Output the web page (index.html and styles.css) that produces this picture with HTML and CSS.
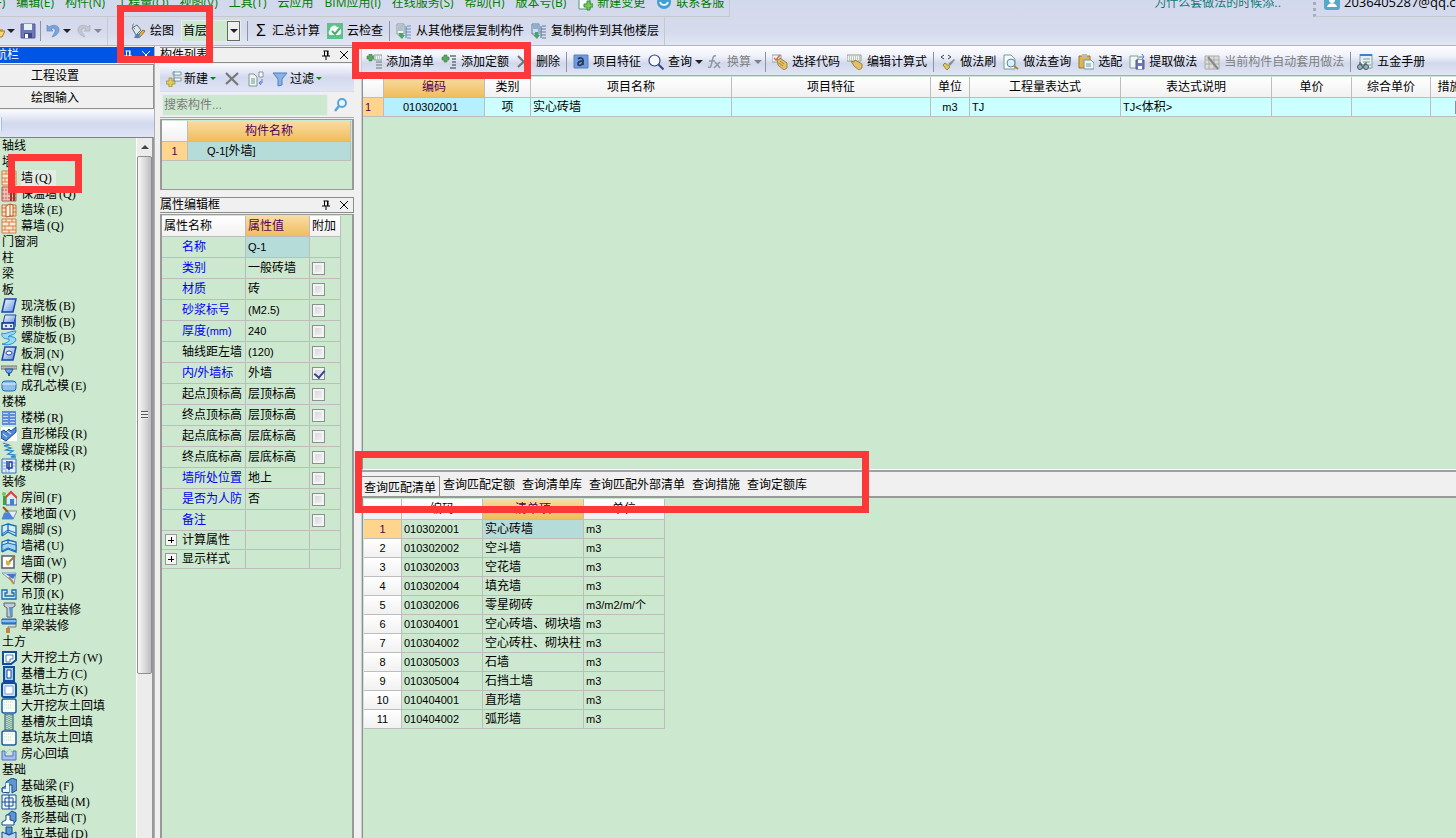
FILE: index.html
```html
<!DOCTYPE html>
<html lang="zh-CN">
<head>
<meta charset="utf-8">
<title>构件做法</title>
<link rel="stylesheet" href="styles.css">
</head>
<body>
<svg class="sprite" aria-hidden="true">
  <defs>
    <linearGradient id="blue" x1="0" y1="0" x2="1" y2="1"><stop offset="0" stop-color="#fff"/><stop offset="1" stop-color="#5c8fe0"/></linearGradient>
  </defs>
  <symbol id="pin" viewBox="0 0 10 10"><path d="M2.5 1h5M3.5 1v5M6.500 1v5M1 6h8M5 6v4" stroke="currentColor" fill="none"/><path d="M6 1h1.500v5H6z" fill="currentColor"/></symbol>
  <symbol id="close" viewBox="0 0 10 10"><path d="M1 1l8 8M9 1L1 9" stroke="currentColor" fill="none"/></symbol>
  <symbol id="open" viewBox="0 0 16 16"><path d="M1 4h5l1 2h7v8H1z" fill="#d8a63c"/><path d="M1 14l3-6h12l-3 6z" fill="#f7d675" stroke="#a87a22"/></symbol>
  <symbol id="save" viewBox="0 0 16 16"><path d="M1 1h14v14H1z" fill="#7077b8" stroke="#555b9b"/><path d="M4 1h8v6H4z" fill="#e6f0fb"/><path d="M4 10h8v5H4z" fill="#3c4a88"/><path d="M5 11h3v4H5z" fill="#fff"/></symbol>
  <symbol id="undo" viewBox="0 0 16 16"><path d="M2 2v6h6L6 6c3-2 5 0 4 3-1 2-2 3-3 5 4-1 7-4 7-7 0-5-6-6-10-3z" fill="#7ba4d8" stroke="#4f80bd" stroke-width=".6"/></symbol>
  <symbol id="redo" viewBox="0 0 16 16"><path d="M14 2v6H8l2-2C7 4 5 6 6 9c1 2 2 3 3 5-4-1-7-4-7-7 0-5 6-6 10-3z" fill="#c3c7d2" stroke="#a4a9b6" stroke-width=".6"/></symbol>
  <symbol id="draw" viewBox="0 0 16 16"><path d="M2 5l5-3 4 5-5 5z" fill="#dfe8e8" stroke="#557181"/><path d="M4 1c-2 0-2 3 1 5" fill="none" stroke="#777"/><path d="M13 7l2 1-5 6-3 1 1-3z" fill="#e6b53c" stroke="#947327"/><path d="M6 11h4l-1 4H4z" fill="#4d83c4"/></symbol>
  <symbol id="check" viewBox="0 0 16 16"><rect width="16" height="16" fill="#5dc28a"/><path d="M3 12a3 3 0 010-5 4 4 0 017-3 4 4 0 014 4 3 3 0 01-2 4z" fill="#f3fff5"/><path d="M5 8l3 3 5-6" fill="none" stroke="#4caa73" stroke-width="2"/></symbol>
  <symbol id="copyfrom" viewBox="0 0 16 16"><path d="M1 1h7v10H1z" fill="#edf2ec" stroke="#8b9995"/><path d="M2 3h5M2 5h5M2 7h5M11 3h4M10 6h5M10 9h5M10 12h5M11 15h4" stroke="#718fb1"/><path d="M10 3v12" stroke="#4a80bb"/><path d="M3 10h4v2h2l-3 4-4-4h1z" fill="#4da363"/></symbol>
  <symbol id="copyto" viewBox="0 0 16 16"><path d="M1 1h7v10H1z" fill="#c9def3" stroke="#5782b5"/><path d="M2 3h5M2 5h5M11 3h4M10 6h5M10 9h5M10 12h5M11 15h4" stroke="#657991"/><path d="M10 3v12" stroke="#4a6e8b"/><path d="M4 9h3v3h2l-3 4-4-4h2z" fill="#4da363"/></symbol>
  <symbol id="newdoc" viewBox="0 0 16 16"><path d="M2 0h8l3 4v10H2z" fill="#f8fbff" stroke="#4d9770"/><path d="M10 6v3H7v3h3v3h3v-3h3V9h-3V6z" fill="#7bc85c" stroke="#379237"/></symbol>
  <symbol id="service" viewBox="0 0 16 16"><circle cx="8" cy="7" r="7" fill="#40a0dc"/><path d="M4 7c1 4 7 4 8 0M5 4h2M9 4h2" stroke="#fff" stroke-width="1.500" fill="none"/></symbol>
  <symbol id="user" viewBox="0 0 16 16"><rect width="16" height="16" rx="3" fill="#55a9c8"/><circle cx="8" cy="6" r="3" fill="#fff"/><path d="M3 13c1-5 9-5 10 0z" fill="#fff"/></symbol>
  <symbol id="addnew" viewBox="0 0 16 16"><path d="M7 1h8v3H7zM8 7h7v3H8z" fill="#f5ffff" stroke="#789aa0"/><path d="M8 0v10" stroke="#789aa0"/><path d="M3 7h3v3h3v3H6v3H3v-3H0v-3h3z" fill="#e3ce57" stroke="#92812d" stroke-width=".7"/></symbol>
  <symbol id="cross" viewBox="0 0 16 16"><path d="M2 2l12 12M14 2L2 13" stroke="#777" stroke-width="2.200"/></symbol>
  <symbol id="copy" viewBox="0 0 16 16"><path d="M1 3h5l3 3v9H1z" fill="#eef4f6" stroke="#80969b"/><path d="M3 8h4M3 10h4M3 12h4" stroke="#6b9b83"/><path d="M11 1h4v5h-4z" fill="#fff" stroke="#80969b"/><path d="M14 8v4h-3m2-2l-2 2 2 2" stroke="#527fd0" fill="none"/></symbol>
  <symbol id="filter" viewBox="0 0 16 16"><path d="M1 2h14L10 8v6l-4 1V8z" fill="#8bb2e8" stroke="#507ebc"/></symbol>
  <symbol id="search" viewBox="0 0 16 16"><circle cx="9" cy="6" r="4" fill="#eaf7ff" stroke="#57a4dc" stroke-width="2"/><path d="M6 9l-4 5" stroke="#57a4dc" stroke-width="2.500"/></symbol>
  <symbol id="addlist" viewBox="0 0 16 16"><path d="M3 0h3v2h2v3H6v2H3V5H1V2h2z" fill="#57a75e" stroke="#357f3e" stroke-width=".6"/><path d="M8 1h8v5H8z" fill="#edf4f0" stroke="#8b9995"/><path d="M9 3h6M9 5h6" stroke="#9aa" stroke-dasharray="1 1"/><path d="M10 8h6M10 11h6M10 14h6" stroke="#8b9999" stroke-width="1.500"/></symbol>
  <symbol id="addquota" viewBox="0 0 16 16"><path d="M3 1h3v2h2v3H6v2H3V6H1V3h2z" fill="#57a75e" stroke="#357f3e" stroke-width=".6"/><path d="M9 2h6M11 5h4M11 8h4M11 11h4M9 14h6" stroke="#66716c" stroke-width="1.400"/></symbol>
  <symbol id="feature" viewBox="0 0 16 16"><path d="M1 1h14v13H1z" fill="#6f9cdf" stroke="#5780be"/><path d="M5 5c2-2 5-1 5 1v5M10 7c-3 0-5 1-5 3 0 2 3 2 5-1" fill="none" stroke="#273b63" stroke-width="1.800"/></symbol>
  <symbol id="lens" viewBox="0 0 16 16"><circle cx="6.500" cy="6.500" r="5.500" fill="#f5f8ff" stroke="#35457e" stroke-width="1.200"/><path d="M10.500 10.500l5 5" stroke="#35457e" stroke-width="2"/></symbol>
  <symbol id="fx" viewBox="0 0 16 16"><path d="M9 2c-3-1-3 2-4 6s-1 6-4 5M2 7h6M8 8l5 6M13 8l-6 6" stroke="#8f96a1" stroke-width="1.500" fill="none"/></symbol>
  <symbol id="code" viewBox="0 0 16 16"><path d="M0 1h9v7H0z" fill="#eef3f8" stroke="#91a1b3"/><path d="M2 4l2 2 4-5" stroke="#e66147" stroke-width="1.500" fill="none"/><path d="M5 5l2 1 1-2 7 5v5l-3 2-6-5z" fill="#e0c06b" stroke="#a08538"/><path d="M8 7l4 3M7 9l4 3" stroke="#a08538"/></symbol>
  <symbol id="formula" viewBox="0 0 16 16"><path d="M0 1h14v6H0z" fill="#f3f5ee" stroke="#8f9a91"/><path d="M2 3h11M2 5h11" stroke="#899b91" stroke-dasharray="1 1"/><path d="M4 7l3 1 1-2 7 4v4l-3 2-5-4z" fill="#e0c06b" stroke="#a08538"/></symbol>
  <symbol id="brush" viewBox="0 0 16 16"><path d="M4 1L1 3l3 2M8 1l3 2-3 2" stroke="#345" fill="none"/><path d="M14 5l1 1-5 6-2-2z" fill="#8a8f84"/><path d="M5 9l5 4-3 3-4-5z" fill="#d9ca61" stroke="#98882c"/></symbol>
  <symbol id="query" viewBox="0 0 16 16"><path d="M1 1h7l4 4v10H1z" fill="#f6fbf7" stroke="#789a99"/><circle cx="8" cy="9" r="4" fill="#d8eef9" stroke="#5e86a0"/><path d="M11 12l4 3" stroke="#ad853a" stroke-width="2"/></symbol>
  <symbol id="paste" viewBox="0 0 16 16"><path d="M1 2h11v12H1z" fill="#dfb64d" stroke="#99772a"/><path d="M4 0h5v4H4z" fill="#b5bdc0"/><path d="M6 6h7l3 3v6H6z" fill="#eef7f5" stroke="#7795a0"/><path d="M8 10h5M8 12h5" stroke="#7795a0"/></symbol>
  <symbol id="extract" viewBox="0 0 16 16"><path d="M1 2h8v12H1z" fill="#eef8f1" stroke="#809f93"/><path d="M7 6h8v9H7z" fill="#6f78b4" stroke="#4e5b90"/><path d="M9 6h4v3H9zM9 12h4v3H9z" fill="#fff"/><path d="M10 3h5m-2-3l2 3-2 2" stroke="#4f83b7" fill="none"/></symbol>
  <symbol id="auto" viewBox="0 0 16 16"><path d="M1 2h14v13H1z" fill="#ddd" stroke="#aaa"/><path d="M1 6h14M1 10h14M5 2v13M10 2v13" stroke="#aaa"/><path d="M4 3l10 12" stroke="#888" stroke-width="2"/></symbol>
  <symbol id="manual" viewBox="0 0 16 16"><path d="M3 0h12v14H3z" fill="#e4f0f5" stroke="#829eaa"/><path d="M3 1h12" stroke="#3a80d5" stroke-width="2"/><path d="M6 5h7M6 8h7M8 11h6" stroke="#87a28c"/><circle cx="3" cy="13" r="2.500" fill="#9bb2b5" stroke="#3f5961"/><circle cx="9" cy="13" r="2.500" fill="#9bb2b5" stroke="#3f5961"/><path d="M2 9h2v2h4V9h2" stroke="#3f5961" fill="none"/></symbol>
  <symbol id="brick" viewBox="0 0 16 16"><path d="M1 1h14v14H1z" fill="#fbe9d6" stroke="#d77b3e"/><path d="M1 4h14M1 8h14M1 12h14M5 1v3M11 1v3M8 4v4M4 8v4M12 8v4M8 12v3" stroke="#d77b3e"/></symbol>
  <symbol id="brickred" viewBox="0 0 16 16"><path d="M1 1h14v14H1z" fill="#edc0b5" stroke="#bd5548"/><path d="M1 4h14M1 8h14M1 12h14" stroke="#bd5548" stroke-dasharray="2 1"/><path d="M10 4v11M13 4v11" stroke="#9b362d" stroke-width="2"/></symbol>
  <symbol id="pier" viewBox="0 0 16 16"><path d="M1 3h14v11H1z" fill="#f7dfc5" stroke="#cf6c30"/><path d="M1 6h4M1 10h4M11 6h4M11 10h4" stroke="#cf6c30"/><path d="M5 4l4-2v12l-4 1zM9 2l3 1v11H9" fill="#fff3e4" stroke="#b65823"/></symbol>
  <symbol id="slab" viewBox="0 0 16 16"><path d="M4 1h11l-3 13H1z" fill="url(#blue)" stroke="#1d46a8" stroke-width="1.500"/></symbol>
  <symbol id="precast" viewBox="0 0 16 16"><path d="M4 1h11l-2 8H2z" fill="url(#blue)" stroke="#1d46a8"/><path d="M1 9h12v6H1z" fill="#dceaff" stroke="#142c83" stroke-width="1.500"/><path d="M4 11h2v2H4zM9 11h2v2H9zM13 9l2-8v11l-2 3z" fill="#3c65bc"/></symbol>
  <symbol id="spiral" viewBox="0 0 16 16"><path d="M1 3c3 2 8-2 14-2-1 5-6 3-8 6 3-1 7 0 8 2 0 5-9 7-14 5 4-1 8-2 7-5-5 0-8-2-7-6z" fill="#98d9fa" stroke="#278ed1"/></symbol>
  <symbol id="hole" viewBox="0 0 16 16"><path d="M4 1h11l-3 13H1z" fill="url(#blue)" stroke="#1d46a8" stroke-width="1.500"/><ellipse cx="8" cy="7" rx="3" ry="2" fill="#fff" stroke="#1d46a8"/></symbol>
  <symbol id="cap" viewBox="0 0 16 16"><path d="M0 4h16v3H0z" fill="#bbb" stroke="#777"/><path d="M4 7h8l-2 4H6z" fill="#76a6ec" stroke="#25529c"/><path d="M7 11h2v3H7z" fill="#25529c"/></symbol>
  <symbol id="core" viewBox="0 0 16 16"><rect x="1" y="3" width="14" height="10" rx="3" fill="#8cbfe9" stroke="#266ab4"/><path d="M1 6h14" stroke="#e4f4ff"/></symbol>
  <symbol id="stair" viewBox="0 0 16 16"><path d="M1 1h14v14H1z" fill="#5f8bdc"/><path d="M2 3.500h5M9 3.500h5M2 6.500h5M9 6.500h5M2 9.500h5M9 9.500h5M2 12.500h5M9 12.500h5" stroke="#c4d8fb"/></symbol>
  <symbol id="flight" viewBox="0 0 16 16"><path d="M0 1h16v14H0z" fill="#fff"/><path d="M0 6l3-2 2 2 3-3 2 2 5-4v5L5 15l-5-3z" fill="#548bd9" stroke="#17479b"/><path d="M2 8l4 3M6 5l4 3" stroke="#fff"/></symbol>
  <symbol id="coil" viewBox="0 0 16 16"><path d="M2 1l6 2-5 1 7 2-5 2 7 1-5 3 7 1-4 2h5" stroke="#2d82c5" stroke-width="1.300" fill="none"/></symbol>
  <symbol id="well" viewBox="0 0 16 16"><path d="M1 1h14v14H1z" fill="#e4eeff" stroke="#3a68bd"/><path d="M2 5h3M2 8h3M2 11h3M12 5h3M12 8h3M8 12v3M5 12v3" stroke="#7ba0e0"/><path d="M6 3v7h5V4H8v8" stroke="#1b3f9b" stroke-width="1.500" fill="none"/></symbol>
  <symbol id="house" viewBox="0 0 16 16"><path d="M5 7l5-5 6 6v7H5z" fill="#dce9f9" stroke="#548"/><path d="M4 8l6-6 6 6" fill="none" stroke="#e33a3a" stroke-width="2"/><path d="M9 9h4v6H9z" fill="#4180cf"/><path d="M2 6h3v9H2z" fill="#39a342"/><circle cx="3" cy="4" r="2" fill="#6cc85c"/></symbol>
  <symbol id="floor" viewBox="0 0 16 16"><path d="M5 5h11l-4 8H1z" fill="#e4efff" stroke="#888"/><path d="M3 7l5-1 5 7H1z" fill="#4b84d8"/><path d="M2 1l5 5" stroke="#8b5b1c" stroke-width="2"/></symbol>
  <symbol id="skirt" viewBox="0 0 16 16"><path d="M1 14V4l6-2v8l-6 4M7 2l8 2v10l-8-4" fill="#d5ecf8" stroke="#186dbb" stroke-width="1.300"/><path d="M1 12l6-4 8 3" stroke="#186dbb" fill="none"/></symbol>
  <symbol id="dado" viewBox="0 0 16 16"><path d="M1 14V4l6-2v9l-6 3M7 2l8 2v10l-8-3" fill="#d5ecf8" stroke="#186dbb" stroke-width="1.300"/><path d="M1 7l6-2 8 2v6l-8-3-6 3z" fill="#9ed3f2" stroke="#186dbb"/></symbol>
  <symbol id="face" viewBox="0 0 16 16"><path d="M1 2h12v12H1z" fill="#fff" stroke="#555c72" stroke-width="1.500"/><path d="M14 2L8 8" stroke="#9b7a4a" stroke-width="2"/><path d="M5 6l5 3-3 3-2-2z" fill="#d6ae43"/></symbol>
  <symbol id="ceiling" viewBox="0 0 16 16"><path d="M1 3h14l-2 10z" fill="#dbe8ff" stroke="#8b98b0"/><path d="M5 4h10l-3 5z" fill="#3d78ce"/><path d="M8 7l5 7" stroke="#b58a42" stroke-width="2"/></symbol>
  <symbol id="hang" viewBox="0 0 16 16"><path d="M1 4h5v3H4v3h9V7h-2V4h4v9H1z" fill="#d6edff" stroke="#1768ae" stroke-width="1.300"/></symbol>
  <symbol id="column" viewBox="0 0 16 16"><path d="M3 1h11v3l-3 2v9H6V6L3 4z" fill="#c5cbd3" stroke="#5a6370"/><path d="M8 5h3v9H9z" fill="#5595db"/></symbol>
  <symbol id="beam" viewBox="0 0 16 16"><path d="M1 1h14v5H1z" fill="#4289d4" stroke="#275b98"/><path d="M1 3h14" stroke="#d5eeff"/><path d="M15 6v3H7v2" stroke="#778" fill="none"/><path d="M5 10h4v5H5z" fill="#bd8641"/></symbol>
  <symbol id="pit" viewBox="0 0 16 16"><path d="M2 2h13v8l-5 4H2z" fill="#fff" stroke="#0e4e9a" stroke-width="2"/><path d="M5 5h7v4H9v3H5z" fill="#fff" stroke="#4a82be"/></symbol>
  <symbol id="trench" viewBox="0 0 16 16"><path d="M3 1h10v14H3z" fill="#aac9ec" stroke="#0e4e9a" stroke-width="2"/><path d="M6 4h4v8H6z" fill="#fff" stroke="#0e4e9a"/></symbol>
  <symbol id="base" viewBox="0 0 16 16"><rect x="1" y="1" width="14" height="14" rx="2" fill="#d2e5fa" stroke="#0e4e9a" stroke-width="2"/><path d="M4 4h8v8H4z" fill="#fff" stroke="#75a0d0"/></symbol>
  <symbol id="fill" viewBox="0 0 16 16"><rect x="1" y="1" width="14" height="14" rx="2" fill="#f5fbf5" stroke="#205aa5" stroke-width="1.500"/><path d="M3 4h10M3 7h8M3 10h8" stroke="#c4dfc6" stroke-dasharray="1 1"/></symbol>
  <symbol id="gravel" viewBox="0 0 16 16"><path d="M4 0h8v16H4z" fill="#bedac5" stroke="#0e4e73"/><path d="M6 1v14M8 2v13M10 1v14" stroke="#477a70" stroke-dasharray="1 1"/></symbol>
  <symbol id="backfill" viewBox="0 0 16 16"><path d="M1 5h3v5h8V5h3v9H1z" fill="#a6bdf1" stroke="#5572bd"/><path d="M5 7l4-4 3 5" stroke="#9aa" stroke-dasharray="1 1" fill="none"/></symbol>
  <symbol id="fbeam" viewBox="0 0 16 16"><path d="M1 14v-4l4-2V4l6-4 5 2v10l-5 3V7H8v8z" fill="#6094cf" stroke="#154b91"/><path d="M2 11h3V5h3v9H2z" fill="#eef7ff"/></symbol>
  <symbol id="raft" viewBox="0 0 16 16"><path d="M1 1h14v14H1z" fill="#eef7ff" stroke="#154b91"/><path d="M4 4h8v8H4zM8 1v14M1 8h14" stroke="#154b91" fill="none"/></symbol>
  <symbol id="strip" viewBox="0 0 16 16"><path d="M5 6l6-5 4 2v8l-3 3z" fill="#6094cf" stroke="#154b91"/><path d="M5 5h4v5l4 1v4H1v-3l4-2z" fill="#fff" stroke="#154b91"/></symbol>
  <symbol id="footing" viewBox="0 0 16 16"><path d="M1 6l7 3 7-3v6l-7 4-7-4z" fill="#b9d6f4" stroke="#154b91"/><path d="M5 1h6v6L8 9 5 7z" fill="#5c94d1" stroke="#154b91"/></symbol>
</svg>

<div class="app">
  <header class="top">
    <div class="menu-row">
      <nav class="menu" aria-label="主菜单">
        <button>文件(F)</button><button>编辑(E)</button><button>构件(N)</button><button>工程量(Q)</button><button>视图(V)</button><button>工具(T)</button><button>云应用</button><button>BIM应用(I)</button><button>在线服务(S)</button><button>帮助(H)</button><button>版本号(B)</button>
        <button><svg class="icon"><use href="#newdoc"/></svg>新建变更</button>
        <button><svg class="icon"><use href="#service"/></svg>联系客服</button>
      </nav>
      <a class="tip" href="#">为什么套做法的时候添..</a>
      <div class="account"><svg class="icon"><use href="#user"/></svg>2036405287@qq.com</div>
    </div>
    <div class="bar">
      <div class="quick">
        <button aria-label="打开"><svg class="icon"><use href="#open"/></svg><i class="caret"></i></button>
        <button aria-label="保存"><svg class="icon"><use href="#save"/></svg></button>
        <span class="sep"></span>
        <button aria-label="撤销"><svg class="icon"><use href="#undo"/></svg><i class="caret"></i></button>
        <button aria-label="重做"><svg class="icon"><use href="#redo"/></svg><i class="caret dim"></i></button>
      </div>
      <div class="tools">
        <button><svg class="icon"><use href="#draw"/></svg>绘图</button>
        <span class="combo"><select aria-label="楼层"><option>首层</option></select><span class="drop"><i class="caret"></i></span></span>
        <span class="sep"></span>
        <button><span class="sigma">Σ</span>汇总计算</button>
        <button><svg class="icon"><use href="#check"/></svg>云检查</button>
        <span class="sep"></span>
        <button><svg class="icon"><use href="#copyfrom"/></svg>从其他楼层复制构件</button>
        <button><svg class="icon"><use href="#copyto"/></svg>复制构件到其他楼层</button>
      </div>
    </div>
  </header>

  <div class="work">
    <aside class="side">
      <div class="caption active"><span class="cut">模块导航栏</span><svg class="mini"><use href="#pin"/></svg><svg class="mini"><use href="#close"/></svg></div>
      <button class="wide">工程设置</button>
      <button class="wide">绘图输入</button>
      <div class="strip"><span class="stub"></span></div>
      <div class="treebox">
        <ul class="tree">
          <li class="cat">轴线</li>
          <li class="cat">墙</li>
          <li><svg class="icon"><use href="#brick"/></svg><span class="picked">墙<span class="key">(Q)</span></span></li>
          <li><svg class="icon"><use href="#brickred"/></svg>保温墙<span class="key">(Q)</span></li>
          <li><svg class="icon"><use href="#pier"/></svg>墙垛<span class="key">(E)</span></li>
          <li><svg class="icon"><use href="#brick"/></svg>幕墙<span class="key">(Q)</span></li>
          <li class="cat">门窗洞</li>
          <li class="cat">柱</li>
          <li class="cat">梁</li>
          <li class="cat">板</li>
          <li><svg class="icon"><use href="#slab"/></svg>现浇板<span class="key">(B)</span></li>
          <li><svg class="icon"><use href="#precast"/></svg>预制板<span class="key">(B)</span></li>
          <li><svg class="icon"><use href="#spiral"/></svg>螺旋板<span class="key">(B)</span></li>
          <li><svg class="icon"><use href="#hole"/></svg>板洞<span class="key">(N)</span></li>
          <li><svg class="icon"><use href="#cap"/></svg>柱帽<span class="key">(V)</span></li>
          <li><svg class="icon"><use href="#core"/></svg>成孔芯模<span class="key">(E)</span></li>
          <li class="cat">楼梯</li>
          <li><svg class="icon"><use href="#stair"/></svg>楼梯<span class="key">(R)</span></li>
          <li><svg class="icon"><use href="#flight"/></svg>直形梯段<span class="key">(R)</span></li>
          <li><svg class="icon"><use href="#coil"/></svg>螺旋梯段<span class="key">(R)</span></li>
          <li><svg class="icon"><use href="#well"/></svg>楼梯井<span class="key">(R)</span></li>
          <li class="cat">装修</li>
          <li><svg class="icon"><use href="#house"/></svg>房间<span class="key">(F)</span></li>
          <li><svg class="icon"><use href="#floor"/></svg>楼地面<span class="key">(V)</span></li>
          <li><svg class="icon"><use href="#skirt"/></svg>踢脚<span class="key">(S)</span></li>
          <li><svg class="icon"><use href="#dado"/></svg>墙裙<span class="key">(U)</span></li>
          <li><svg class="icon"><use href="#face"/></svg>墙面<span class="key">(W)</span></li>
          <li><svg class="icon"><use href="#ceiling"/></svg>天棚<span class="key">(P)</span></li>
          <li><svg class="icon"><use href="#hang"/></svg>吊顶<span class="key">(K)</span></li>
          <li><svg class="icon"><use href="#column"/></svg>独立柱装修</li>
          <li><svg class="icon"><use href="#beam"/></svg>单梁装修</li>
          <li class="cat">土方</li>
          <li><svg class="icon"><use href="#pit"/></svg>大开挖土方<span class="key">(W)</span></li>
          <li><svg class="icon"><use href="#trench"/></svg>基槽土方<span class="key">(C)</span></li>
          <li><svg class="icon"><use href="#base"/></svg>基坑土方<span class="key">(K)</span></li>
          <li><svg class="icon"><use href="#fill"/></svg>大开挖灰土回填</li>
          <li><svg class="icon"><use href="#gravel"/></svg>基槽灰土回填</li>
          <li><svg class="icon"><use href="#fill"/></svg>基坑灰土回填</li>
          <li><svg class="icon"><use href="#backfill"/></svg>房心回填</li>
          <li class="cat">基础</li>
          <li><svg class="icon"><use href="#fbeam"/></svg>基础梁<span class="key">(F)</span></li>
          <li><svg class="icon"><use href="#raft"/></svg>筏板基础<span class="key">(M)</span></li>
          <li><svg class="icon"><use href="#strip"/></svg>条形基础<span class="key">(T)</span></li>
          <li><svg class="icon"><use href="#footing"/></svg>独立基础<span class="key">(D)</span></li>
        </ul>
        <div class="scroll"><div class="up"><i></i></div><div class="thumb"><span class="grip"></span></div></div>
      </div>
    </aside>

    <section class="parts">
      <div class="caption"><span>构件列表</span><svg class="mini"><use href="#pin"/></svg><svg class="mini"><use href="#close"/></svg></div>
      <div class="parts-tools">
        <button><svg class="icon"><use href="#addnew"/></svg>新建<i class="caret green"></i></button>
        <button aria-label="删除构件"><svg class="icon"><use href="#cross"/></svg></button>
        <button aria-label="复制构件"><svg class="icon"><use href="#copy"/></svg></button>
        <button><svg class="icon"><use href="#filter"/></svg>过滤<i class="caret green"></i></button>
      </div>
      <div class="find"><input type="text" placeholder="搜索构件..." aria-label="搜索构件"><button aria-label="搜索"><svg class="icon"><use href="#search"/></svg></button></div>
      <div class="box list">
        <table class="grid names">
          <colgroup><col class="w-26"><col></colgroup>
          <tr><th></th><th class="hot">构件名称</th></tr>
          <tr><td class="rowno cur num">1</td><td class="sel pad"><span class="num">Q-1[</span>外墙<span class="num">]</span></td></tr>
        </table>
      </div>
      <div class="caption second"><span>属性编辑框</span><svg class="mini"><use href="#pin"/></svg><svg class="mini"><use href="#close"/></svg></div>
      <div class="box props-box">
        <table class="grid props">
          <colgroup><col class="w-84"><col class="w-64"><col class="w-31"></colgroup>
          <tr><th>属性名称</th><th class="hot">属性值</th><th>附加</th></tr>
          <tr><td class="blue">名称</td><td class="sel num">Q-1</td><td></td></tr>
          <tr><td class="blue">类别</td><td>一般砖墙</td><td><input type="checkbox" aria-label="类别"></td></tr>
          <tr><td class="blue">材质</td><td>砖</td><td><input type="checkbox" aria-label="材质"></td></tr>
          <tr><td class="blue">砂浆标号</td><td class="num">(M2.5)</td><td><input type="checkbox" aria-label="砂浆标号"></td></tr>
          <tr><td class="blue">厚度<span class="num">(mm)</span></td><td class="num">240</td><td><input type="checkbox" aria-label="厚度"></td></tr>
          <tr><td>轴线距左墙</td><td class="num">(120)</td><td><input type="checkbox" aria-label="轴线距左墙"></td></tr>
          <tr><td class="blue">内/外墙标</td><td>外墙</td><td><input type="checkbox" aria-label="内/外墙标" checked></td></tr>
          <tr><td>起点顶标高</td><td>层顶标高</td><td><input type="checkbox" aria-label="起点顶标高"></td></tr>
          <tr><td>终点顶标高</td><td>层顶标高</td><td><input type="checkbox" aria-label="终点顶标高"></td></tr>
          <tr><td>起点底标高</td><td>层底标高</td><td><input type="checkbox" aria-label="起点底标高"></td></tr>
          <tr><td>终点底标高</td><td>层底标高</td><td><input type="checkbox" aria-label="终点底标高"></td></tr>
          <tr><td class="blue">墙所处位置</td><td>地上</td><td><input type="checkbox" aria-label="墙所处位置"></td></tr>
          <tr><td class="blue">是否为人防</td><td>否</td><td><input type="checkbox" aria-label="是否为人防"></td></tr>
          <tr><td class="blue">备注</td><td></td><td><input type="checkbox" aria-label="备注"></td></tr>
          <tr class="group"><td><button class="plus" aria-label="展开计算属性"></button>计算属性</td><td></td><td></td></tr>
          <tr class="group"><td><button class="plus" aria-label="展开显示样式"></button>显示样式</td><td></td><td></td></tr>
        </table>
      </div>
    </section>

    <main class="main">
      <div class="main-tools">
        <button><svg class="icon"><use href="#addlist"/></svg>添加清单</button>
        <button><svg class="icon"><use href="#addquota"/></svg>添加定额</button>
        <button><svg class="icon"><use href="#cross"/></svg>删除</button>
        <span class="sep"></span>
        <button><svg class="icon"><use href="#feature"/></svg>项目特征</button>
        <button><svg class="icon"><use href="#lens"/></svg>查询<i class="caret"></i></button>
        <button disabled><svg class="icon"><use href="#fx"/></svg>换算<i class="caret"></i></button>
        <span class="sep"></span>
        <button><svg class="icon"><use href="#code"/></svg>选择代码</button>
        <button><svg class="icon"><use href="#formula"/></svg>编辑计算式</button>
        <span class="sep"></span>
        <button><svg class="icon"><use href="#brush"/></svg>做法刷</button>
        <button><svg class="icon"><use href="#query"/></svg>做法查询</button>
        <button><svg class="icon"><use href="#paste"/></svg>选配</button>
        <button><svg class="icon"><use href="#extract"/></svg>提取做法</button>
        <button disabled><svg class="icon"><use href="#auto"/></svg>当前构件自动套用做法</button>
        <span class="sep"></span>
        <button><svg class="icon"><use href="#manual"/></svg>五金手册</button>
      </div>
      <div class="upper">
        <table class="grid works">
          <colgroup><col class="w-21"><col class="w-101"><col class="w-46"><col class="w-201"><col class="w-199"><col class="w-39"><col class="w-151"><col class="w-151"><col class="w-80"><col class="w-79"><col class="w-62"></colgroup>
          <tr><th></th><th class="hot">编码</th><th>类别</th><th>项目名称</th><th>项目特征</th><th>单位</th><th>工程量表达式</th><th>表达式说明</th><th>单价</th><th>综合单价</th><th>措施项目</th></tr>
          <tr class="cyan"><td class="rowno cur num">1</td><td class="code num">010302001</td><td class="mid">项</td><td>实心砖墙</td><td></td><td class="mid num">m3</td><td class="num">TJ</td><td><span class="num">TJ&lt;</span>体积<span class="num">&gt;</span></td><td></td><td></td><td class="mid"><input type="checkbox" aria-label="措施项目"></td></tr>
        </table>
      </div>
      <div class="tabs" role="tablist">
        <button role="tab" aria-selected="true">查询匹配清单</button><button role="tab">查询匹配定额</button><button role="tab">查询清单库</button><button role="tab">查询匹配外部清单</button><button role="tab">查询措施</button><button role="tab">查询定额库</button>
      </div>
      <div class="lower">
        <table class="grid match">
          <colgroup><col class="w-38"><col class="w-81"><col class="w-101"><col class="w-81"></colgroup>
          <tr><th></th><th>编码</th><th class="hot">清单项</th><th>单位</th></tr>
          <tr><td class="rowno cur num">1</td><td class="num">010302001</td><td class="sel">实心砖墙</td><td class="num">m3</td></tr>
          <tr><td class="rowno num">2</td><td class="num">010302002</td><td>空斗墙</td><td class="num">m3</td></tr>
          <tr><td class="rowno num">3</td><td class="num">010302003</td><td>空花墙</td><td class="num">m3</td></tr>
          <tr><td class="rowno num">4</td><td class="num">010302004</td><td>填充墙</td><td class="num">m3</td></tr>
          <tr><td class="rowno num">5</td><td class="num">010302006</td><td>零星砌砖</td><td class="num">m3/m2/m/个</td></tr>
          <tr><td class="rowno num">6</td><td class="num">010304001</td><td>空心砖墙、砌块墙</td><td class="num">m3</td></tr>
          <tr><td class="rowno num">7</td><td class="num">010304002</td><td>空心砖柱、砌块柱</td><td class="num">m3</td></tr>
          <tr><td class="rowno num">8</td><td class="num">010305003</td><td>石墙</td><td class="num">m3</td></tr>
          <tr><td class="rowno num">9</td><td class="num">010305004</td><td>石挡土墙</td><td class="num">m3</td></tr>
          <tr><td class="rowno num">10</td><td class="num">010404001</td><td>直形墙</td><td class="num">m3</td></tr>
          <tr><td class="rowno num">11</td><td class="num">010404002</td><td>弧形墙</td><td class="num">m3</td></tr>
        </table>
      </div>
    </main>
  </div>
</div>
<div class="mark mark-draw"></div>
<div class="mark mark-add"></div>
<div class="mark mark-wall"></div>
<div class="mark mark-tabs"></div>
</body>
</html>
```
FILE: styles.css
```css
* { box-sizing: border-box; }
body {
  margin: 0;
  position: relative;
  overflow: hidden;
  background: #f0f0f0;
  color: #000;
  font: 12px/16px "Liberation Sans", "Noto Sans CJK SC", sans-serif;
}
button, input, select { font: inherit; color: inherit; margin: 0; }
button { border: 0; padding: 0; background: none; display: inline-flex; align-items: center; gap: 4px; white-space: nowrap; flex: none; }
.sprite { position: absolute; width: 0; height: 0; }
.icon { width: 16px; height: 16px; flex: none; }
.mini { width: 10px; height: 10px; flex: none; }
.app { height: 100vh; display: flex; flex-direction: column; overflow: hidden; }

.caret { border: 4px solid transparent; border-top-color: #222; border-bottom: 0; }
.caret.dim { border-top-color: #888; }
.caret.green { border-width: 3px; border-top-color: #108010; border-bottom: 0; }
.sep { width: 1px; height: 20px; background: #8c93a5; margin: 0 -1px; flex: none; }

/* header */
.top { flex: none; background: linear-gradient(#d3d9ed, #d5daec 70%, #e2e7f5); border-bottom: 1px solid #b2b5c8; }
.menu-row { display: flex; height: 17px; align-items: flex-end; }
.menu {
  display: flex; gap: 11px; height: 28px; padding: 0 5px 5px; margin-left: -37px;
  align-items: flex-end; color: #007c00; flex: none;
  border-right: 1px solid #c8c8cc; border-bottom: 1px solid #c8c8cc;
  font-family: "Open Sans", "Noto Sans CJK SC", sans-serif;
}
.tip { margin-left: auto; height: 22px; color: #107878; text-decoration: none; }
.account {
  display: flex; align-items: flex-end; gap: 4px; height: 28px; width: 143px; margin-left: 32px; padding: 0 0 6px 8px;
  border-left: 3px dotted #aab; border-bottom: 1px solid #c8c8cc; overflow: hidden; flex: none;
  font-family: "Open Sans", sans-serif; font-size: 13px;
}
.bar { display: flex; height: 28px; }
.quick { display: flex; align-items: center; gap: 5px; width: 123px; padding-left: 4px; margin-left: -15px; border-right: 1px solid #c4c8d8; }
.quick button { gap: 2px; }
.tools { display: flex; align-items: center; gap: 7px; padding: 0 5px 0 22px; border-right: 1px solid #c8c8cc; }
.combo { position: relative; width: 60px; height: 22px; background: #cce8cf; border: 1px solid #e6efe6; flex: none; }
.combo select { appearance: none; border: 0; background: none; width: 100%; height: 20px; padding: 0 1px; }
.drop { position: absolute; right: 0; top: 0; width: 13px; height: 20px; border: 1px solid #666; background: #f0f0f0; display: flex; align-items: center; justify-content: center; pointer-events: none; }
.sigma { width: 14px; font-size: 16px; text-align: center; }

.work { flex: 1; min-height: 0; display: flex; }
.caption { display: flex; align-items: center; gap: 8px; height: 16px; padding-right: 4px; border: 1px solid #8c8c8c; border-width: 1px 1px 1px 0; flex: none; overflow: hidden; }
.caption span { flex: 1; }
.caption.active { background: #0055e5; border-color: #0055e5; color: #fff; padding-right: 2px; }
.caption .cut { margin-left: -41px; white-space: nowrap; }

/* navigation */
.side { flex: none; width: 155px; padding-top: 1px; display: flex; flex-direction: column; border-right: 1px solid #b0b0b0; }
.wide { height: 23px; justify-content: center; padding-right: 43px; border: 1px solid #909090; border-left: 0; background: #f0f0f0; }
.caption.active + .wide { margin-top: 1px; }
.wide + .wide { height: 22px; border-top: 0; }
.strip { height: 27px; flex: none; display: flex; align-items: center; background: linear-gradient(#fafbff, #d3d9ee 50%, #dfe5f5); margin-top: 1px; }
.stub { width: 2px; height: 14px; background: #eef6f8; border-right: 1px solid #a9bfdc; }
.treebox { flex: 1; min-height: 0; display: flex; border-top: 1px solid #808080; border-right: 2px solid #999; background: #cce8cf; }
.tree { flex: 1; min-width: 0; margin: 0; padding: 0 0 0 1px; list-style: none; overflow: hidden; }
.tree li { display: flex; align-items: center; height: 16px; white-space: nowrap; }
.tree .icon { margin-right: 4px; }
.tree .cat { padding-left: 1px; }
.key { font-family: "Liberation Serif", serif; margin-left: 2px; }
.picked { background: #e4ece4; padding-right: 4px; }
.scroll { width: 16px; background: #ececec; border-left: 1px solid #fff; flex: none; display: flex; flex-direction: column; }
.up { height: 18px; display: flex; align-items: center; justify-content: center; flex: none; }
.up i { border: 4px solid transparent; border-bottom-color: #444; border-top: 0; }
.thumb { flex: 0 1 74%; display: flex; align-items: center; justify-content: center; border: 1px solid #8f8f8f; border-radius: 2px; background: linear-gradient(90deg, #f8f8f8, #dcdcdc 50%, #bcbcc2); }
.grip { width: 7px; height: 8px; background: repeating-linear-gradient(#555 0 1px, #eee 1px 3px); }

/* component list and properties */
.parts { flex: none; width: 194px; margin-left: 5px; padding-top: 1px; display: flex; flex-direction: column; }
.parts-tools { display: flex; align-items: center; gap: 8px; height: 27px; margin-top: 1px; padding: 2px 5px 0 6px; flex: none; background: linear-gradient(#fafbff, #d3d9ee 50%, #dfe5f5); }
.parts-tools button { gap: 2px; }
.find { display: flex; align-items: center; gap: 5px; height: 27px; padding: 0 2px; flex: none; border-bottom: 1px solid #aaa; border-top: 1px solid #ddd; }
.find input { flex: 1; min-width: 0; height: 22px; padding: 0 1px; border: 1px solid #e4eef0; background: #cce8cf; }
.find input::placeholder { color: #7c7c7c; opacity: 1; }
.find button { margin-right: 3px; }
.box { border: 1px solid #999; border-left-width: 2px; border-right-width: 2px; background: #cce8cf; padding: 1px 1px 1px 0; overflow: hidden; }
.list { height: 71px; margin-top: 1px; flex: none; }
.second { margin-top: 7px; }
.props-box { flex: 1; min-height: 0; margin-top: 1px; border-bottom: 0; }

/* tables */
.grid { table-layout: fixed; border-collapse: separate; border-spacing: 0; }
.grid th, .grid td { padding: 0 2px; border-right: 1px solid #bdbdbd; border-bottom: 1px solid #bdbdbd; white-space: nowrap; overflow: hidden; font-weight: normal; text-align: left; line-height: 16px; }
.grid th { background: linear-gradient(#fff, #f1f1f1); text-align: center; }
.grid .hot { background: linear-gradient(#f8dca4, #f0bd5c); color: #550055; }
.grid .rowno { background: linear-gradient(#fff, #f1f1f1); text-align: center; }
.grid .rowno.cur { background: #ffd48c; color: #550055; }
.grid .sel { background: #b5dcd8; }
.grid .mid { text-align: center; }
.num { font-size: 11px; }
.names { width: 100%; }
.names th { height: 21px; }
.names td { height: 19px; }
.names .pad { padding-left: 19px; }
.props { width: 179px; }
.props th { height: 21px; text-align: left; }
.props td { height: 21px; }
.props td:first-child { padding: 0 0 0 20px; }
.props .group td { height: 19px; }
.props .group td:first-child { padding-left: 3px; }
.props .blue { color: #0000f0; }
.plus { width: 12px; height: 12px; margin-right: 5px; vertical-align: -1px; border: 1px solid #999; background: linear-gradient(#000, #000) center / 6px 1px no-repeat, linear-gradient(#000, #000) center / 1px 6px no-repeat, #f5f5f5; }
input[type="checkbox"] { appearance: none; display: inline-block; width: 13px; height: 13px; vertical-align: middle; border: 1px solid #8e8f8f; background: linear-gradient(135deg, #cfd3d6, #f6f6f6); box-shadow: inset 0 0 0 2px #f4f4f4; }
input[type="checkbox"]:checked::before { content: ""; display: block; width: 5px; height: 8px; margin: 0 0 0 3px; border: solid #2d4a91; border-width: 0 2px 2px 0; transform: rotate(40deg); }
.w-21 { width: 21px; } .w-26 { width: 26px; } .w-31 { width: 31px; } .w-38 { width: 38px; } .w-39 { width: 39px; }
.w-46 { width: 46px; } .w-62 { width: 62px; } .w-64 { width: 64px; } .w-79 { width: 79px; } .w-80 { width: 80px; }
.w-81 { width: 81px; } .w-84 { width: 84px; } .w-101 { width: 101px; } .w-151 { width: 151px; } .w-199 { width: 199px; } .w-201 { width: 201px; }

/* work area */
.main { flex: 1; min-width: 0; margin-left: 7px; display: flex; flex-direction: column; border-left: 1px solid #c9cdd9; }
.main-tools { display: flex; align-items: center; gap: 7px; height: 30px; padding: 2px 0 0 4px; flex: none; overflow: hidden; background: linear-gradient(#fdfdff, #f0f2fa 35%, #d2d8ec 60%, #e0e5f4); border-bottom: 1px solid #aaa; }
.main-tools .caret { margin: 0 -3px 0 -1px; }
.main-tools button:disabled { color: #808080; }
.main-tools button:disabled .caret { border-top-color: #808080; }
.upper { flex: none; height: 394px; padding-top: 1px; border-left: 1px solid #909090; border-bottom: 1px solid #fff; background: #cce8cf; overflow: hidden; }
.works { width: 1130px; }
.works th { height: 21px; }
.works td { height: 19px; }
.works .cyan td { background: #ccffff; }
.works .cyan .code { background: #b4f0ff; padding-left: 19px; }
.works .cyan .cur { background: #ffd48c; text-align: left; }
.tabs { display: flex; align-items: center; flex: none; height: 28px; gap: 7px; padding: 2px 0 0 0; border-top: 2px solid #a0a0a8; border-bottom: 2px solid #999; }
.tabs [aria-selected="true"] { height: 20px; align-self: flex-end; padding: 2px 3px 0 2px; margin-right: -4px; border: 1px solid #888; border-width: 1px 1px 0 0; }
.lower { flex: 1; min-height: 0; padding: 1px 0 0 1px; border-left: 1px solid #909090; background: #cce8cf; overflow: hidden; }
.match { width: 301px; }
.match th { height: 21px; }
.match td { height: 19px; }

/* annotation frames over the window */
.mark { position: absolute; border: 7px solid #fc3838; pointer-events: none; }
.mark-draw { left: 117px; top: 5px; width: 96px; height: 58px; }
.mark-add { left: 352px; top: 42px; width: 179px; height: 37px; }
.mark-wall { left: 8px; top: 154px; width: 74px; height: 39px; }
.mark-tabs { left: 355px; top: 451px; width: 514px; height: 62px; }
```
